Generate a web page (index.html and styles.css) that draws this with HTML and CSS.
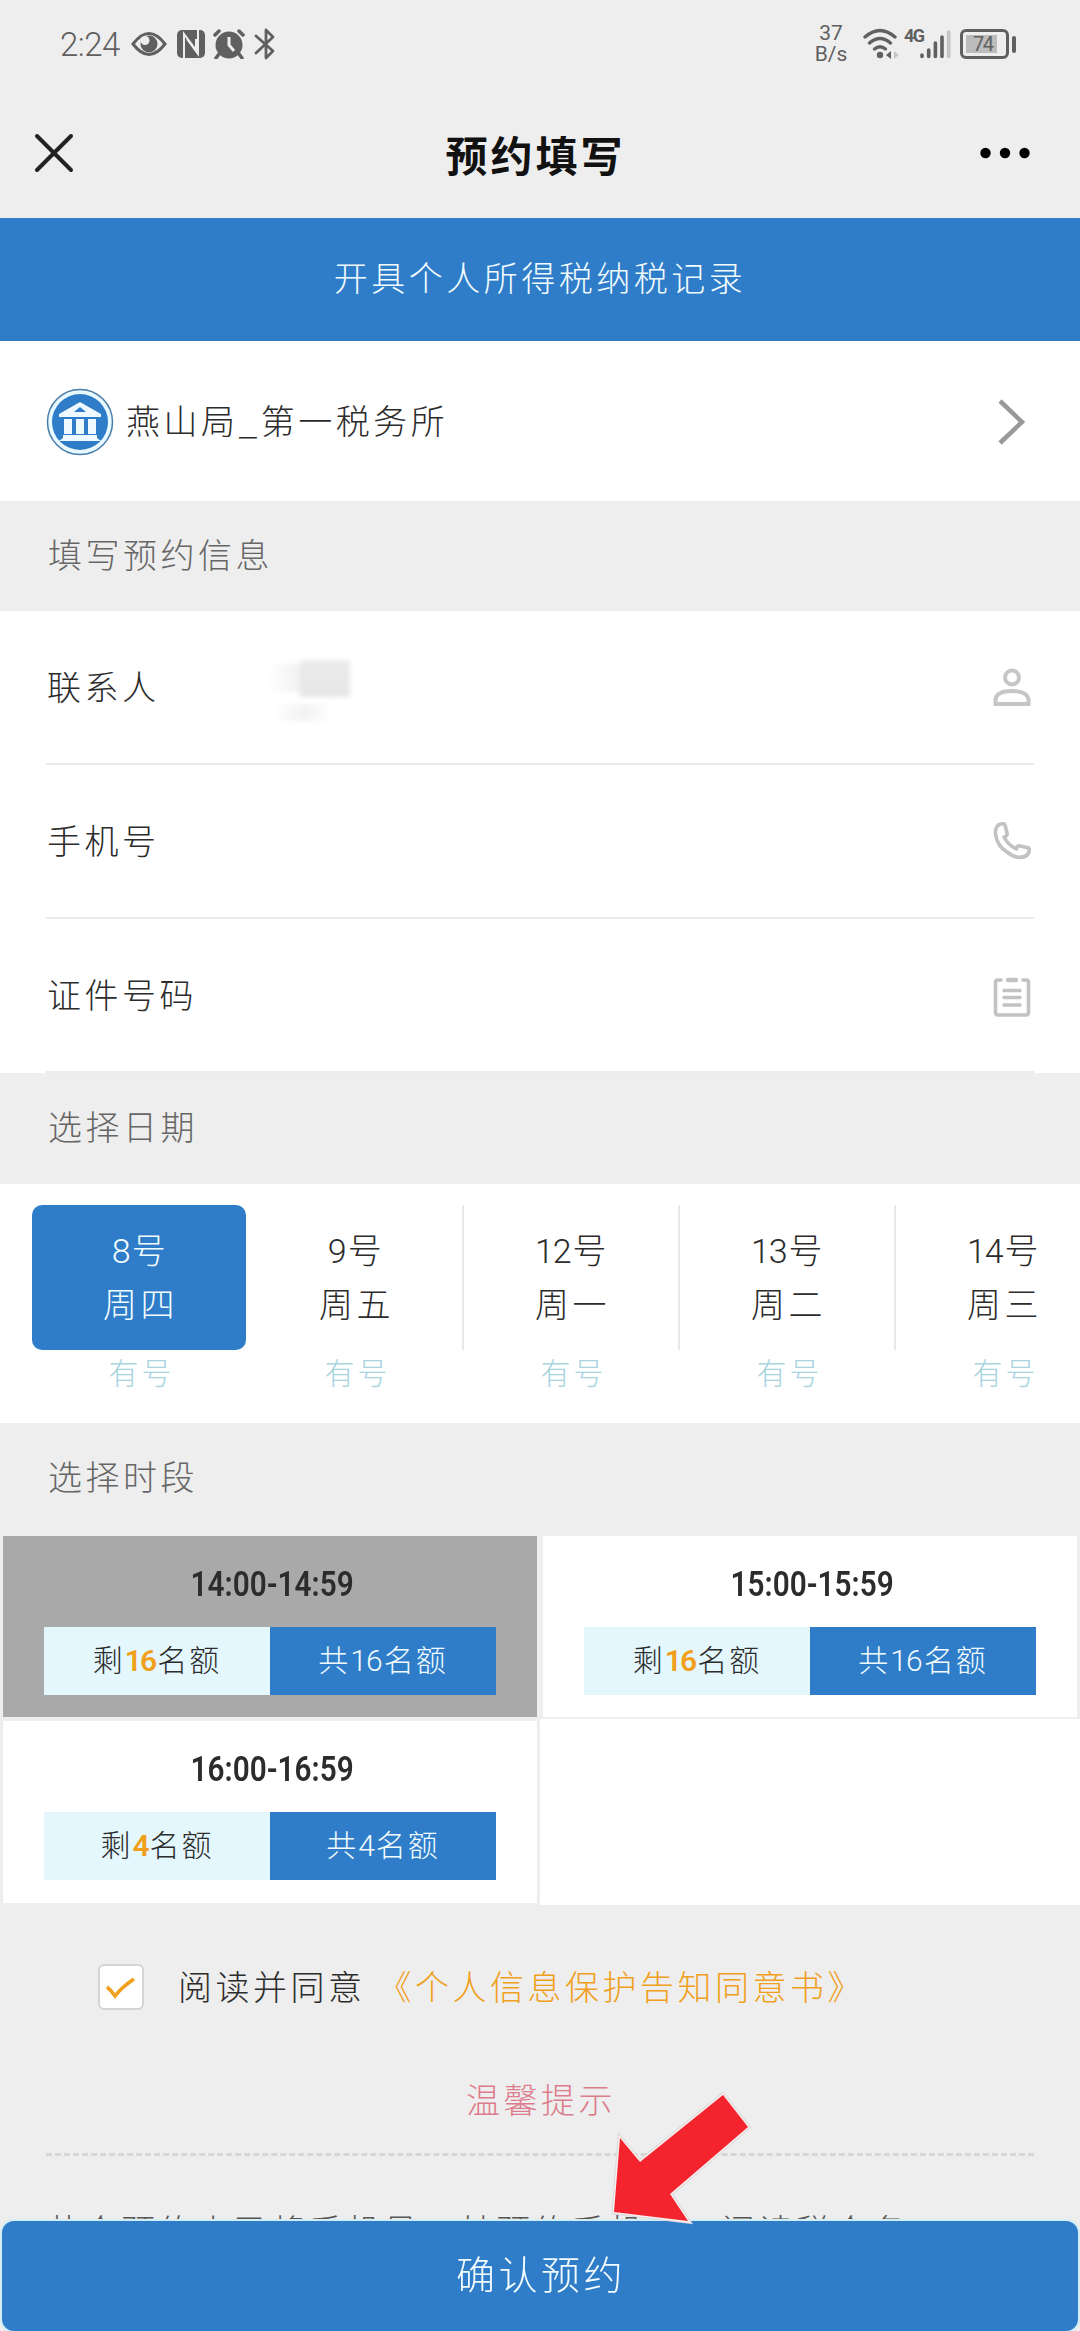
FILE: index.html
```html
<!DOCTYPE html>
<html lang="zh-CN">
<head>
	<meta charset="utf-8">
	<title>预约填写</title>
	<link rel="stylesheet" href="styles.css">
</head>

<body>
	<div class="status">
		<span class="clock">2:24</span>
		<svg class="eye" width="36" height="26" viewBox="0 0 36 26"><path d="M2 13Q18-8 34 13Q18 34 2 13Z" fill="none" stroke="#606060" stroke-width="3"/><circle cx="18" cy="13" r="8.5" fill="#606060"/><circle cx="14" cy="9.5" r="4.5" fill="#eee"/></svg>
		<svg class="nfc" width="28" height="28" viewBox="0 0 28 28"><rect width="28" height="28" rx="5" fill="#606060"/><path d="M7 28V4L19 20V9M10 9L21 24V0" fill="none" stroke="#eee" stroke-width="2"/></svg>
		<svg class="alarm" width="32" height="30" viewBox="0 0 32 30"><circle cx="16" cy="16" r="13.5" fill="#606060"/><path d="M2 6L6 2M30 6L26 2M6 25L3 29M26 25L29 29" stroke="#606060" stroke-width="3.5" stroke-linecap="round"/><path d="M16 8V16L21 22" fill="none" stroke="#eee" stroke-width="3"/></svg>
		<svg class="bt" width="22" height="32" viewBox="0 0 22 32"><path d="M2 8L19 23L12 30V2L19 9L2 25" fill="none" stroke="#606060" stroke-width="2.8" stroke-linejoin="round" stroke-linecap="round"/></svg>
		<span class="speed"><span>37</span><span>B/s</span></span>
		<svg class="wifi" width="36" height="32" viewBox="0 0 36 32"><g fill="none" stroke="#606060" stroke-width="3.4" stroke-linecap="round"><path d="M2 9Q17-4 32 9"/><path d="M6.500 15Q17 6 27.500 15"/><path d="M11.500 21Q17 16.500 22.500 21"/></g><circle cx="17" cy="27" r="3.2" fill="#606060"/><path d="M28 23V31L23 27Z" fill="#606060"/><path d="M31 23V31L35.500 27Z" fill="#c4c4c4"/></svg>
		<span class="net">4G</span>
		<svg class="signal" width="32" height="30" viewBox="0 0 32 30"><g stroke="#606060" stroke-width="3.600" stroke-linecap="round"><path d="M2 26V27.500M8.700 21V27.500M15.400 14V27.500M22 8V27.500"/><path d="M28.700 3V27.500" stroke="#c4c4c4"/></g></svg>
		<span class="battery"><b>74</b></span><i class="cap"></i>
	</div>

	<header>
		<svg width="40" height="40" viewBox="0 0 40 40"><path d="M3 3L37 37M37 3L3 37" stroke="#222" stroke-width="4" stroke-linecap="round"/></svg>
		<h1>预约填写</h1>
		<svg width="50" height="12" viewBox="0 0 50 12"><circle cx="5.500" cy="6" r="5.200"/><circle cx="25" cy="6" r="5.200"/><circle cx="44.500" cy="6" r="5.200"/></svg>
	</header>

	<div class="service">开具个人所得税纳税记录</div>

	<div class="office">
		<svg width="68" height="68" viewBox="0 0 68 68"><circle cx="34" cy="34" r="32.500" fill="#e8f9ff" stroke="#4b7ba8" stroke-width="1.500"/><circle cx="34" cy="34" r="28" fill="#2f7dc8"/><path d="M34 14L55 26V29H13V26Z" fill="#eefaff"/><path d="M34 19L40 24H28Z" fill="#2f7dc8"/><path d="M18 31h8v15h-8zM30 31h8v15h-8zM42 31h8v15h-8zM17 47h34v3l4 3H13l4-3z" fill="#eefaff"/></svg>
		<span>燕山局_第一税务所</span>
		<svg class="arrow" width="30" height="48" viewBox="0 0 30 48"><path d="M3 3L25 24L3 45" fill="none" stroke="#999" stroke-width="4.500"/></svg>
	</div>

	<h2 class="info">填写预约信息</h2>
	<div class="form">
		<div class="field">
			<label>联系人</label>
			<span class="masked"></span>
			<svg width="38" height="38" viewBox="0 0 38 38"><g fill="none" stroke="#c6c6c6" stroke-width="4"><circle cx="19" cy="9.500" r="7"/><path d="M2.500 36V31Q4 23 19 23T35.500 31V36Z"/></g></svg>
		</div>
		<div class="field">
			<label>手机号</label>
			<svg width="38" height="38" viewBox="0 0 38 38"><path d="M8 2Q2 3 2.500 12Q4 24 14 30Q24 38 33 34Q37 31 36 26L27 24Q24 23 23.500 27Q15 23 11 15Q15 14 14 11L12 3Q11 1 8 2Z" fill="none" stroke="#c2c2c2" stroke-width="3.600" stroke-linejoin="round"/></svg>
		</div>
		<div class="field last">
			<label>证件号码</label>
			<svg width="38" height="40" viewBox="0 0 38 40"><g fill="none" stroke="#c2c2c2" stroke-width="3.600" stroke-linecap="round"><path d="M8 3H5Q2.500 3 2.500 5.500V35Q2.500 38 5 38H33Q35.500 38 35.500 35V5.500Q35.500 3 33 3H30"/><path d="M11 13.500H27M11 20.500H27M11 28H27"/><path d="M15 3H23" stroke-width="4.500"/></g></svg>
		</div>
	</div>

	<h2>选择日期</h2>
	<div class="days">
		<div class="day on"><p><i>8</i>号<br>周四</p><em>有号</em></div>
		<div class="day"><p><i>9</i>号<br>周五</p><em>有号</em></div>
		<div class="day"><p><i>12</i>号<br>周一</p><em>有号</em></div>
		<div class="day"><p><i>13</i>号<br>周二</p><em>有号</em></div>
		<div class="day"><p><i>14</i>号<br>周三</p><em>有号</em></div>
	</div>

	<h2 class="time">选择时段</h2>
	<div class="slots">
		<div class="slot picked">
			<h3>14:00-14:59</h3>
			<div class="quota"><span>剩<b>16</b>名额</span><span class="all">共<i>16</i>名额</span></div>
		</div>
		<div class="slot">
			<h3>15:00-15:59</h3>
			<div class="quota"><span>剩<b>16</b>名额</span><span class="all">共<i>16</i>名额</span></div>
		</div>
		<div class="slot">
			<h3>16:00-16:59</h3>
			<div class="quota"><span>剩<b>4</b>名额</span><span class="all">共<i>4</i>名额</span></div>
		</div>
		<div class="empty"></div>
	</div>

	<div class="agree">
		<span class="box"><svg width="32" height="26" viewBox="0 0 32 26"><path d="M2 13Q6 16 10 22Q17 13 29 5" fill="none" stroke="#f0a01c" stroke-width="3.600"/></svg></span>
		<span>阅读并同意</span>
		<a>《个人信息保护告知同意书》</a>
	</div>

	<div class="tips">
		<h4>温馨提示</h4>
		<p>若个预约人已将手机号，其预约手机号，阅读税个名</p>
	</div>

	<div class="submit">确认预约</div>
	<svg class="pointer" width="160" height="150" viewBox="0 0 160 150"><path d="M123 15L148 47L70 114L88 141L14 132L20 58L40 82Z" fill="#f4242f" stroke="#d9d9d9" stroke-width="5"/><path d="M123 15L148 47L70 114L88 141L14 132L20 58L40 82Z" fill="#f4242f" stroke="#fbeeee" stroke-width="3"/><path d="M123 15L148 47L70 114L88 141L14 132L20 58L40 82Z" fill="#f4242f"/></svg>
</body>
</html>
```

FILE: styles.css
```css
* {box-sizing:border-box; margin:0; padding:0;}
html {height:2331px; overflow:hidden;}
body {width:1080px; height:2331px; overflow:hidden; background:#eee; color:#2c2c2c;
	font-family:"Noto Sans CJK SC", sans-serif; font-size:34px; font-weight:300;
	letter-spacing:3.500px;}
svg {display:block; flex:none;}

/* phone status bar */
.status {display:flex; height:88px; padding:0 62px 0 60px; align-items:center; color:#606060;
	font-family:Roboto, sans-serif; letter-spacing:0;}
.clock {width:71px; font-size:33px; letter-spacing:-0.500px; white-space:nowrap;}
.nfc {margin-left:10px;}
.alarm {margin-left:8px;}
.bt {margin-left:9px;}
.speed {display:flex; flex-direction:column; width:36px; margin-left:auto; font-size:21px;
	line-height:25px; text-align:center; font-weight:400;}
.speed span + span {margin-top:-4px;}
.wifi {margin-left:14px;}
.net {align-self:flex-start; margin:26px 0 0 5px; font-size:18px; line-height:20px;
	font-weight:700; width:18px; letter-spacing:-1.500px;}
.signal {margin-left:-2px;}
.battery {width:49px; height:30px; margin-left:8px; padding:3px; border:3px solid #606060;
	border-radius:6px; line-height:0;}
.battery b {display:block; width:31px; height:18px; background:#bcbcbc; font-size:20px;
	line-height:18px; font-weight:400; padding-left:7px; letter-spacing:-1.500px;}
.cap {width:4px; height:17px; margin-left:3px; border-radius:2px; background:#606060;}

header {display:flex; height:130px; padding:0 50px 0 34px; align-items:center;
	justify-content:space-between;}
h1 {font-size:42px; font-weight:700; letter-spacing:3px; color:#111; padding:2px 0 0 17px;
	line-height:60px;}

.service {height:123px; background:#2f7dc8; color:#f2fcff; text-align:center;
	line-height:118px;}
.office {display:flex; align-items:center; height:160px; padding:1px 53px 0 46px;
	background:#fff;}
.office span {margin:-5px 0 0 12px;}
.arrow {margin-left:auto;}

h2 {height:111px; padding-left:48px; font-size:34px; font-weight:300; line-height:106px;
	color:#666;}
.info {height:110px;}
.time {height:113px; line-height:105px;}

.form {background:#fff; padding:0 46px;}
.field {display:flex; height:154px; align-items:center; border-bottom:2px solid #ebebeb;}
.field label {width:221px; margin-top:-3px; padding-left:1px;}
.field svg {margin-left:auto; margin-right:3px;}
.last svg {margin-top:3px;}
.masked {width:84px; height:74px; filter:blur(2px); margin-top:-6px;
	background:linear-gradient(#ebebeb,#e7e7e7) 33px 13px/50px 37px no-repeat,
	linear-gradient(90deg,#fff,#f1f1f1) 0 17px/33px 28px no-repeat,
	linear-gradient(90deg,#fafafa,#f3f3f3,#fff) 14px 57px/50px 17px no-repeat;}

/* narrow digits between the characters */
i {font-style:normal; font-family:"Liberation Sans Narrow", Roboto, sans-serif;
	letter-spacing:-1px; margin-right:2px;}

.days {display:flex; height:239px; padding:21px 0 0 32px; background:#fff;
	overflow:hidden;}
.day {flex:none; width:216px; text-align:center;}
.day p {height:145px; padding:18px 0 0 3px; line-height:52px; border-right:2px solid #e8e8e8;}
.day.on p {width:214px; background:#2f7dc8; color:#f2fcff; border:0; border-radius:10px;}
.day em {display:block; font-style:normal; font-size:30px; letter-spacing:3px;
	padding-left:3px; line-height:43px; color:#a9d5df;}

.slots {display:grid; grid-template-columns:540px 540px; grid-template-rows:184px 185px;}
.slot {margin:0 3px 3px; padding:23px 41px 0; background:#fff;}
.slot + .slot + .slot {margin:1px 3px 2px;}
.slot.picked {background:#a9a9a9;}
.empty {background:#fff; margin-top:-1px;}
h3 {height:50px; padding-left:5px; font-family:Roboto, sans-serif; font-size:35px;
	line-height:51px; font-weight:600; text-align:center; letter-spacing:0;
	transform:scaleX(.85);}
.quota {display:flex; height:68px; margin-top:18px; background:#e4f7fd;}
.quota span {flex:1; text-align:center; font-size:30px; letter-spacing:2px;
	line-height:62px;}
.quota b {color:#f0a01c; font-family:"Liberation Sans Narrow", Roboto, sans-serif;
	font-weight:600; letter-spacing:-2px; margin-right:2px;}
.quota .all {background:#2f7dc8; color:#f2fcff;}

.agree {display:flex; align-items:center; height:164px; padding-left:98px;}
.agree span + span, .agree a {margin-top:-4px;}
.box {display:flex; align-items:center; justify-content:center; width:46px; height:46px;
	margin-right:34px; border:2px solid #d4d4d4; border-radius:6px; background:#fff;}
.agree a {color:#f0a01c; margin-left:12px;}

.tips {padding:0 46px; white-space:nowrap;}
h4 {height:87px; padding-left:2px; border-bottom:3px dashed #d6d6d6; font-size:34px;
	font-weight:300; line-height:60px; text-align:center; color:#dc7c8c;}
.tips p {padding-top:49px; line-height:50px; color:#555;}

.submit {position:fixed; left:2px; top:2221px; width:1076px; height:110px; line-height:103px;
	padding-left:2px; border-radius:12px; background:#2f7dc8; color:#f2fcff; font-size:39px;
	letter-spacing:3.500px; text-align:center; box-shadow:0 0 0 2px #d5edf7;}
.pointer {position:fixed; left:600px; top:2080px;}
```
